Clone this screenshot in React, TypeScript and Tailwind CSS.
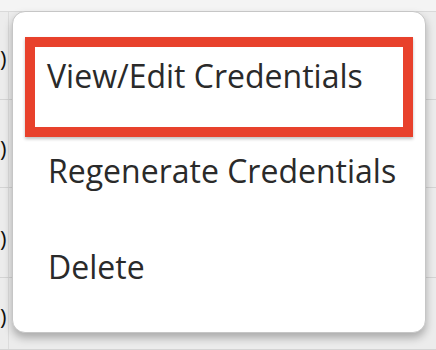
import React from "react";

const rows = [
  { h: "h-[88px]", glyphTop: "pt-[33px]" },
  { h: "h-[88px]", glyphTop: "pt-[35px]" },
  { h: "h-[90px]", glyphTop: "pt-[37px]" },
  { h: "h-[72px]", glyphTop: "pt-[25px]" },
];

function MenuItem({ label, boxed }: { label: string; boxed?: boolean }) {
  if (boxed) {
    return (
      <div className="mx-[12px] h-[100px] border-[10px] border-[#e8412c] pl-[12px] pt-[7px] shadow-[0_2px_3px_rgba(0,0,0,0.25)]">
        <span className="block leading-[44px]">{label}</span>
      </div>
    );
  }
  return (
    <div className="h-[96px] pl-[35px] pt-[12px]">
      <span className="block leading-[44px]">{label}</span>
    </div>
  );
}

export default function App() {
  return (
    <div className="relative h-[350px] w-[436px] overflow-hidden bg-[#ececec] font-['Open_Sans',sans-serif]">
      {/* table behind the menu */}
      <div className="h-[12px] border-b border-[#d9d9d9] bg-[#f4f4f4]" />
      <div className="flex flex-col">
        {rows.map((r, i) => (
          <div key={i} className={`${r.h} flex border-b border-[#d4d4d4]`}>
            <div className={`w-[9px] border-r border-[#dcdcdc] ${r.glyphTop}`}>
              <span className="block text-[22px] leading-[26px] text-[#111]">)</span>
            </div>
          </div>
        ))}
      </div>

      {/* context menu */}
      <div className="absolute left-[12px] top-[11px] h-[322px] w-[414px] rounded-[13px] border border-[#c6c6c6] bg-white pt-[25px] text-[32px] text-[#2a2a2a] shadow-[0_5px_9px_rgba(0,0,0,0.28)]">
        <MenuItem label="View/Edit Credentials" boxed />
        <MenuItem label="Regenerate Credentials" />
        <MenuItem label="Delete" />
      </div>
    </div>
  );
}
